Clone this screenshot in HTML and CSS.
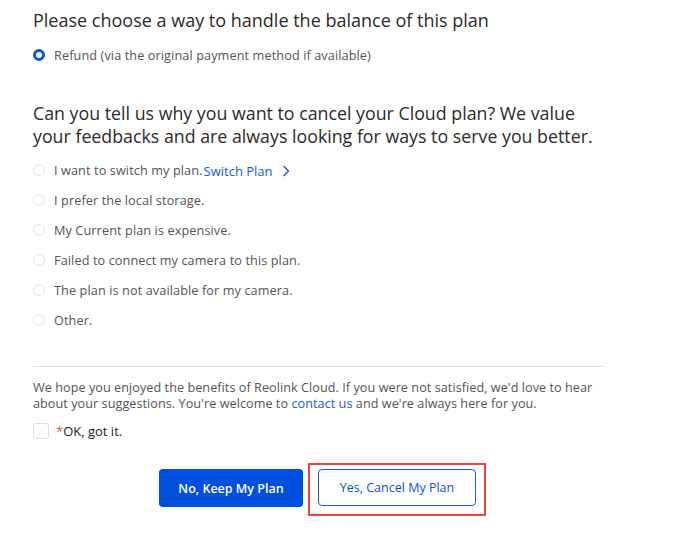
FILE: index.html
```html
<!DOCTYPE html>
<html>
<head>
<meta charset="utf-8">
<link rel="stylesheet" href="styles.css">
</head>
<body>
<div class="page">
  <h1 class="title">Please choose a way to handle the balance of this plan</h1>
  <div class="option option-refund">
    <span class="radio radio-on"></span>
    <span class="label">Refund (via the original payment method if available)</span>
  </div>

  <h2 class="title title-reason">Can you tell us why you want to cancel your Cloud plan? We value your feedbacks and are always looking for ways to serve you better.</h2>

  <div class="reasons">
    <div class="option"><span class="radio"></span><span class="label">I want to switch my plan.</span><a class="switch">Switch Plan<svg class="chev" width="8" height="12" viewBox="0 0 8 12"><path d="M1.5 1 L6.5 6 L1.5 11" fill="none" stroke="#1a5ae0" stroke-width="1.4"/></svg></a></div>
    <div class="option"><span class="radio"></span><span class="label">I prefer the local storage.</span></div>
    <div class="option"><span class="radio"></span><span class="label">My Current plan is expensive.</span></div>
    <div class="option"><span class="radio"></span><span class="label">Failed to connect my camera to this plan.</span></div>
    <div class="option"><span class="radio"></span><span class="label">The plan is not available for my camera.</span></div>
    <div class="option"><span class="radio"></span><span class="label">Other.</span></div>
  </div>

  <div class="divider"></div>

  <p class="note">We hope you enjoyed the benefits of Reolink Cloud. If you were not satisfied, we'd love to hear about your suggestions. You're welcome to <a class="link">contact us</a> and we're always here for you.</p>

  <label class="confirm"><span class="checkbox"></span><span class="req">*</span>OK, got it.</label>

  <div class="actions">
    <button class="btn btn-primary">No, Keep My Plan</button>
    <div class="highlight"><button class="btn btn-outline">Yes, Cancel My Plan</button></div>
  </div>
</div>
</body>
</html>
```
FILE: styles.css
```css
* { box-sizing: border-box; }
html, body { margin: 0; padding: 0; background: #fff; }
body { font-family: "Open Sans", "Noto Sans", sans-serif; color: #333; }
.page { width: 610px; padding: 8px 0 0 33px; }
.title { margin: 0; font-size: 18px; font-weight: 400; line-height: 24px; color: #2b2b2b; }
.title-reason { margin-top: 32px; width: 575px; font-size: 17.8px; line-height: 23px; }
.option { display: flex; align-items: center; height: 30px; font-size: 12.7px; color: #555; }
.option-refund { margin-top: 8px; }
.radio { width: 12px; height: 12px; border: 1px solid #e2e2e2; border-radius: 50%; margin-right: 9px; flex: none; }
.radio-on { border: 3px solid #0a55e0; }
.label { letter-spacing: 0.1px; }
.reasons { margin-top: 7px; }
.switch { color: #1a5ae0; font-size: 13px; display: inline-flex; align-items: center; margin-left: 1px; margin-top: 2px; }
.chev { margin-left: 9px; }
.divider { margin-top: 31px; width: 570px; height: 1px; background: #dedede; }
.note { margin: 12px 0 0; width: 575px; font-size: 12.65px; line-height: 16px; color: #555; letter-spacing: 0.05px; }
.link { color: #1a5ae0; }
.confirm { display: flex; align-items: center; margin-top: 12px; font-size: 13px; color: #222; height: 16px; }
.checkbox { width: 16px; height: 16px; border: 1px solid #dcdcdc; border-radius: 3px; margin-right: 7px; }
.req { color: #e84a3e; }
.actions { display: flex; align-items: flex-start; margin-top: 24px; padding-left: 126px; }
.btn { font-family: inherit; font-size: 12.5px; height: 38px; border-radius: 4px; cursor: pointer; }
.btn-primary { width: 144px; background: #0050e0; color: #fff; border: none; font-weight: 600; margin-top: 6px; }
.highlight { margin-left: 5px; border: 2px solid #e8473b; padding: 4px 8px 8px 8px; }
.btn-outline { width: 158px; background: #fff; color: #0a50d8; border: 1px solid #1a5ae0; font-weight: 400; height: 37px; }
```
